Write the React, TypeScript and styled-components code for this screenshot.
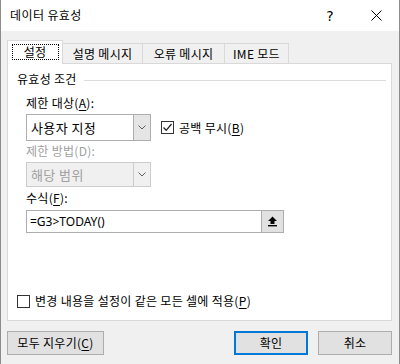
import React, { useState } from 'react';
import styled, { createGlobalStyle, css } from 'styled-components';

const GlobalStyle = createGlobalStyle`
  html, body {
    margin: 0;
    padding: 0;
    background: #f0f0f0;
  }
  body {
    font-family: 'Noto Sans CJK KR', 'Noto Sans', sans-serif;
    font-size: 12px;
    color: #000;
  }
`;

const Dialog = styled.div`
  display: flex;
  flex-direction: column;
  width: 400px;
  height: 364px;
  box-sizing: border-box;
  background: #f0f0f0;
  border-left: 1px solid #8c8c8c;
  border-right: 1px solid #8c8c8c;
`;

const TitleBar = styled.div`
  display: flex;
  align-items: center;
  height: 31px;
  background: #fff;
  padding-left: 9px;
`;

const Title = styled.div`
  flex: 1;
  font-size: 12px;
  line-height: 16px;
  letter-spacing: 0.4px;
  margin-top: -2px;
`;

const TitleButton = styled.div`
  display: flex;
  align-items: center;
  justify-content: center;
  width: 46px;
  height: 31px;
  font-family: 'DejaVu Sans', sans-serif;
  font-size: 14px;
`;

const Body = styled.div`
  display: flex;
  flex-direction: column;
  padding: 8px 7px 0 6px;
`;

const TabStrip = styled.div`
  display: flex;
  align-items: flex-end;
  height: 24px;
  position: relative;
  z-index: 1;
`;

const Tab = styled.div<{ $active?: boolean; $width: number }>`
  display: flex;
  align-items: center;
  justify-content: center;
  box-sizing: border-box;
  width: ${(p) => p.$width}px;
  height: 20px;
  border: 1px solid #d9d9d9;
  border-bottom: none;
  border-left: none;
  background: #f0f0f0;
  line-height: 16px;
  letter-spacing: 0.3px;
  ${(p) =>
    p.$active &&
    css`
      height: 24px;
      background: #fff;
      border-left: 1px solid #d9d9d9;
      margin-bottom: -1px;
      padding-bottom: 1px;
    `}
`;

const FocusRing = styled.span`
  display: inline-flex;
  align-items: center;
  justify-content: center;
  box-sizing: border-box;
  width: 47px;
  height: 16px;
  border: 1px dotted #000;
`;

const Panel = styled.div`
  display: flex;
  flex-direction: column;
  box-sizing: border-box;
  height: 258px;
  width: 385px;
  background: #fff;
  border: 1px solid #d9d9d9;
  padding: 7px 0 0 9px;
`;

const GroupHeader = styled.div`
  display: flex;
  align-items: center;
  gap: 7px;
  line-height: 16px;
  letter-spacing: 0.3px;
  padding-right: 5px;
`;

const GroupLine = styled.div`
  flex: 1;
  height: 1px;
  background: #dcdcdc;
  margin-top: 2px;
`;

const Indent = styled.div`
  display: flex;
  flex-direction: column;
  padding-left: 9px;
`;

const FieldLabel = styled.div<{ $disabled?: boolean; $top: number }>`
  line-height: 16px;
  letter-spacing: 0.3px;
  margin-top: ${(p) => p.$top}px;
  color: ${(p) => (p.$disabled ? '#a0a0a0' : '#000')};
`;

const Row = styled.div`
  display: flex;
  align-items: center;
  margin-top: 3px;
`;

const Combo = styled.div<{ $disabled?: boolean; $height: number }>`
  display: flex;
  box-sizing: border-box;
  width: 125px;
  height: ${(p) => p.$height}px;
  border: 1px solid ${(p) => (p.$disabled ? '#cccccc' : '#adadad')};
  background: ${(p) => (p.$disabled ? '#f0f0f0' : '#fff')};
  color: ${(p) => (p.$disabled ? '#a0a0a0' : '#000')};
`;

const ComboText = styled.div`
  flex: 1;
  display: flex;
  align-items: center;
  padding-left: 4px;
  font-size: 13px;
  line-height: 16px;
  letter-spacing: 0.4px;
`;

const ComboArrow = styled.div<{ $disabled?: boolean }>`
  display: flex;
  align-items: center;
  justify-content: center;
  width: 16px;
  background: ${(p) => (p.$disabled ? '#f0f0f0' : '#e5e5e5')};
  border-left: 1px solid ${(p) => (p.$disabled ? '#cccccc' : '#adadad')};
`;

const CheckRow = styled.label`
  display: flex;
  align-items: center;
  gap: 5px;
  line-height: 16px;
  letter-spacing: 0.3px;
`;

const Box = styled.span`
  display: inline-flex;
  align-items: center;
  justify-content: center;
  box-sizing: border-box;
  width: 13px;
  height: 13px;
  border: 1px solid #333;
  background: #fff;
`;

const FormulaBox = styled.div`
  display: flex;
  box-sizing: border-box;
  width: 258px;
  height: 23px;
  margin-top: 4px;
  border: 1px solid #adadad;
`;

const FormulaInput = styled.input`
  flex: 1;
  min-width: 0;
  border: none;
  outline: none;
  padding: 0 0 0 3px;
  font-family: 'Noto Sans', sans-serif;
  font-size: 12px;
  color: #000;
  background: #fff;
`;

const RefButton = styled.div`
  display: flex;
  align-items: center;
  justify-content: center;
  width: 21px;
  background: #e1e1e1;
  border-left: 1px solid #adadad;
`;

const Spacer = styled.div`
  flex: 1;
`;

const ApplyRow = styled(CheckRow)`
  margin-bottom: 11px;
`;

const ButtonRow = styled.div`
  display: flex;
  margin-top: 10px;
`;

const Button = styled.div<{ $primary?: boolean; $width: number }>`
  display: flex;
  align-items: center;
  justify-content: center;
  box-sizing: border-box;
  width: ${(p) => p.$width}px;
  height: 24px;
  background: #e1e1e1;
  border: ${(p) => (p.$primary ? '2px solid #0078d7' : '1px solid #adadad')};
  line-height: 16px;
  letter-spacing: 0.3px;
  padding-bottom: 1px;
`;

const Gap = styled.div<{ $width: number }>`
  width: ${(p) => p.$width}px;
`;

const U = styled.span`
  text-decoration: underline;
  text-underline-offset: 2px;
`;

const Chevron = () => (
  <svg width="8" height="5" viewBox="0 0 8 5">
    <path d="M0.5 0.5 L4 4 L7.5 0.5" fill="none" stroke="#606060" strokeWidth="1" />
  </svg>
);

const Check = () => (
  <svg width="11" height="11" viewBox="0 0 11 11">
    <path d="M1.5 5.5 L4.2 8.3 L9.5 2" fill="none" stroke="#222" strokeWidth="1.3" />
  </svg>
);

const UpArrow = () => (
  <svg width="11" height="11" viewBox="0 0 11 11">
    <path d="M5.5 0.5 L10 5 L7.5 5 L7.5 8 L3.5 8 L3.5 5 L1 5 Z" fill="#000" />
    <rect x="1" y="9" width="9" height="1.4" fill="#000" />
  </svg>
);

const CloseIcon = () => (
  <svg width="11" height="11" viewBox="0 0 11 11">
    <path d="M0.5 0.5 L10.5 10.5 M10.5 0.5 L0.5 10.5" stroke="#000" strokeWidth="1" />
  </svg>
);

const tabs = [
  { label: '설정', width: 56 },
  { label: '설명 메시지', width: 80 },
  { label: '오류 메시지', width: 82 },
  { label: 'IME 모드', width: 64 },
];

const App = () => {
  const [ignoreBlank, setIgnoreBlank] = useState(true);
  const [applyAll, setApplyAll] = useState(false);
  const [formula, setFormula] = useState('=G3>TODAY()');

  return (
    <Dialog>
      <GlobalStyle />
      <TitleBar>
        <Title>데이터 유효성</Title>
        <TitleButton>?</TitleButton>
        <TitleButton>
          <CloseIcon />
        </TitleButton>
      </TitleBar>
      <Body>
        <TabStrip>
          {tabs.map((tab, i) => (
            <Tab key={`tab-${i}`} $active={i === 0} $width={tab.width}>
              {i === 0 ? <FocusRing>{tab.label}</FocusRing> : tab.label}
            </Tab>
          ))}
        </TabStrip>
        <Panel>
          <GroupHeader>
            <span>유효성 조건</span>
            <GroupLine />
          </GroupHeader>
          <Indent>
            <FieldLabel $top={8}>
              제한 대상(<U>A</U>):
            </FieldLabel>
            <Row>
              <Combo $height={27}>
                <ComboText>사용자 지정</ComboText>
                <ComboArrow>
                  <Chevron />
                </ComboArrow>
              </Combo>
              <Gap $width={10} />
              <CheckRow onClick={() => setIgnoreBlank(!ignoreBlank)}>
                <Box>{ignoreBlank && <Check />}</Box>
                <span>
                  공백 무시(<U>B</U>)
                </span>
              </CheckRow>
            </Row>
            <FieldLabel $disabled $top={2}>
              제한 방법(D):
            </FieldLabel>
            <Row>
              <Combo $disabled $height={25}>
                <ComboText>해당 범위</ComboText>
                <ComboArrow $disabled>
                  <Chevron />
                </ComboArrow>
              </Combo>
            </Row>
            <FieldLabel $top={3}>
              수식(<U>F</U>):
            </FieldLabel>
            <FormulaBox>
              <FormulaInput value={formula} onChange={(e) => setFormula(e.target.value)} />
              <RefButton>
                <UpArrow />
              </RefButton>
            </FormulaBox>
          </Indent>
          <Spacer />
          <ApplyRow onClick={() => setApplyAll(!applyAll)}>
            <Box>{applyAll && <Check />}</Box>
            <span>
              변경 내용을 설정이 같은 모든 셀에 적용(<U>P</U>)
            </span>
          </ApplyRow>
        </Panel>
        <ButtonRow>
          <Button $width={97}>
            모두 지우기(<U>C</U>)
          </Button>
          <Spacer />
          <Button $primary $width={74}>
            확인
          </Button>
          <Gap $width={10} />
          <Button $width={74}>취소</Button>
        </ButtonRow>
      </Body>
    </Dialog>
  );
};

export default App;
